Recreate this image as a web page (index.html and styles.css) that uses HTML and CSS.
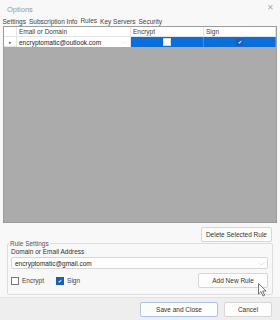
FILE: index.html
```html
<!DOCTYPE html>
<html lang="en">
<head>
    <meta charset="UTF-8">
    <title>Options</title>
    <link rel="stylesheet" href="styles.css">
</head>
<body>
    <div class="window">
        <!-- title bar -->
        <div class="titlebar">
            <span class="title">Options</span>
            <span class="close">&#x2715;</span>
        </div>

        <!-- tabs -->
        <div class="tabs">
            <span class="tab">Settings</span>
            <span class="tab">Subscription Info</span>
            <span class="tab active">Rules</span>
            <span class="tab">Key Servers</span>
            <span class="tab">Security</span>
        </div>

        <div class="page">
            <!-- rules grid -->
            <div class="grid">
                <div class="grid-row grid-head">
                    <div class="rowhead"></div>
                    <div class="cell col-email">Email or Domain</div>
                    <div class="cell col-enc">Encrypt</div>
                    <div class="cell col-sign">Sign</div>
                </div>
                <div class="grid-row grid-data">
                    <div class="rowhead">&#x25B8;</div>
                    <div class="cell col-email">
                        <span>encryptomatic@outlook.com</span>
                        <span class="chev">&#x2335;</span>
                    </div>
                    <div class="cell col-enc selected"><span class="box"></span></div>
                    <div class="cell col-sign selected"><span class="box checked">&#x2714;</span></div>
                </div>
                <div class="grid-empty"></div>
            </div>

            <div class="delete-row">
                <button class="btn">Delete Selected Rule</button>
            </div>

            <!-- rule settings -->
            <fieldset class="group">
                <legend>Rule Settings</legend>
                <div class="label">Domain or Email Address</div>
                <div class="combo">
                    <span>encryptomatic@gmail.com</span>
                    <span class="chev">&#x2335;</span>
                </div>
                <div class="options-row">
                    <label class="check"><span class="cb"></span>Encrypt</label>
                    <label class="check"><span class="cb on">&#x2714;</span>Sign</label>
                    <button class="btn add">Add New Rule</button>
                </div>
            </fieldset>
        </div>

        <!-- footer -->
        <div class="footer">
            <button class="btn primary">Save and Close</button>
            <button class="btn cancel">Cancel</button>
        </div>

        <svg class="cursor" width="10" height="14" viewBox="0 0 10 14">
            <path d="M0.5 0.5 L0.5 11 L3 8.6 L5 13 L6.6 12.3 L4.7 8 L8 8 Z" fill="#fff" stroke="#555" stroke-width="0.8"/>
        </svg>
    </div>
</body>
</html>
```

FILE: styles.css
```css
* {
    box-sizing: border-box;
}

body {
    margin: 0;
    padding: 0;
    font-family: "Liberation Sans", Arial, sans-serif;
    font-size: 6.5px;
    color: #3c3c3c;
    background: #f0f0f0;
}

.window {
    position: relative;
    width: 280px;
    height: 320px;
    display: flex;
    flex-direction: column;
    background: #f8f8f8;
}

.titlebar {
    height: 16px;
    display: flex;
    justify-content: space-between;
    align-items: center;
    padding: 2px 6px 0 7px;
}

.title {
    color: #9a9a9a;
    font-size: 7.5px;
}

.close {
    color: #aaa;
    font-size: 8px;
    margin-top: -4px;
}

/* 选项卡 */
.tabs {
    display: flex;
    height: 10px;
    padding-left: 1px;
    align-items: flex-end;
}

.tab {
    padding: 0 1.5px 1px;
    color: #444;
}

.tab.active {
    background: #fff;
    padding-bottom: 2px;
}

.page {
    flex: 1;
    display: flex;
    flex-direction: column;
    padding: 0 3px;
}

/* 表格 */
.grid {
    height: 197px;
    border: 1px solid #9c9c9c;
    display: flex;
    flex-direction: column;
    background: #ababab;
}

.grid-row {
    display: flex;
    height: 10px;
    background: #fff;
}

.grid-head .cell {
    border-right: 1px solid #e4e4e4;
    border-bottom: 1px solid #e4e4e4;
}

.rowhead {
    width: 13px;
    flex: none;
    border-right: 1px solid #e4e4e4;
    border-bottom: 1px solid #e4e4e4;
    font-size: 5px;
    color: #666;
    display: flex;
    align-items: center;
    justify-content: center;
    background: #fff;
}

.cell {
    display: flex;
    align-items: center;
    padding-left: 2px;
    white-space: nowrap;
}

.col-email {
    width: 114px;
    flex: none;
    justify-content: space-between;
    padding-right: 3px;
    border-right: 1px solid #e4e4e4;
}

.grid-data .col-email {
    background: #fff;
    color: #222;
}

.col-enc {
    width: 73px;
    flex: none;
}

.col-sign {
    flex: 1;
}

.selected {
    background: #0a6fd8;
    justify-content: center;
    padding-left: 0;
    border-right: 1px solid #3b8ee2;
}

.box {
    width: 8px;
    height: 8px;
    background: #fff;
    border: 1px solid #ddd;
}

.box.checked {
    width: 7px;
    height: 7px;
    background: #1a5fb4;
    border-color: #1a5fb4;
    color: #fff;
    font-size: 5px;
    display: flex;
    align-items: center;
    justify-content: center;
}

.chev {
    color: #aaa;
    font-size: 7px;
    transform: scaleX(1.3);
}

.grid-empty {
    flex: 1;
}

.delete-row {
    display: flex;
    justify-content: flex-end;
    padding: 4px 5px 0 0;
}

/* 按钮 */
.btn {
    font-family: inherit;
    font-size: 6.5px;
    color: #333;
    background: #fdfdfd;
    border: 1px solid #d6d6d6;
    border-radius: 2px;
    height: 15px;
    padding: 0 4px;
    flex: none;
}

/* 规则设置 */
.group {
    margin: -2px 4px 0;
    padding: 0 4px 6px 3px;
    border: 1px solid #dddddd;
    border-radius: 2px;
}

.group legend {
    padding: 0 1px;
    margin-left: -2px;
    color: #555;
}

.label {
    color: #333;
    margin: 1px 0 2px;
}

.combo {
    height: 12px;
    background: #fff;
    border: 1px solid #d6d6d6;
    border-radius: 2px;
    display: flex;
    justify-content: space-between;
    align-items: center;
    padding: 0 3px;
    color: #222;
}

.options-row {
    display: flex;
    align-items: center;
    margin-top: 4px;
}

.check {
    display: flex;
    align-items: center;
    gap: 3px;
    margin-right: 12px;
    color: #444;
}

.cb {
    width: 8px;
    height: 8px;
    border: 1px solid #777;
    background: #fff;
}

.cb.on {
    background: #1a5fb4;
    border-color: #1a5fb4;
    color: #fff;
    font-size: 5px;
    display: flex;
    align-items: center;
    justify-content: center;
}

.btn.add {
    margin-left: auto;
    width: 70px;
}

.footer {
    flex: none;
    height: 23px;
    margin-top: auto;
    border-top: 1px solid #e2e2e2;
    background: #eeeeee;
    display: flex;
    justify-content: flex-end;
    align-items: center;
    gap: 6px;
    padding-right: 8px;
}

.btn.primary {
    border-color: #a9c4e6;
    width: 78px;
}

.btn.cancel {
    width: 48px;
}

.cursor {
    position: absolute;
    left: 258px;
    top: 283px;
}
```
